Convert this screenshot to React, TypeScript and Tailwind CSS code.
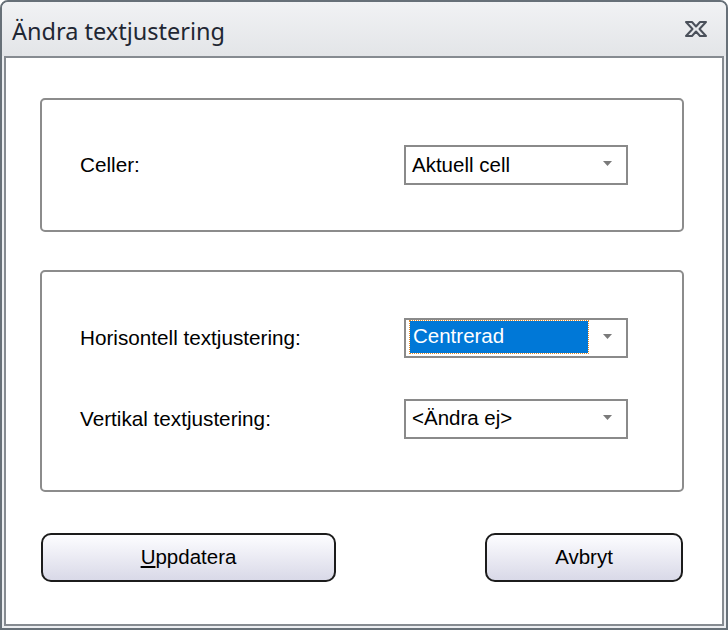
import React from 'react';

const body = { fontFamily: '"Liberation Sans", Arial, sans-serif' };

function Arrow() {
  return (
    <svg width="9" height="5" viewBox="0 0 9 5" className="absolute right-[14px] top-[14px]">
      <path d="M0 0 H9 L4.5 5 Z" fill="#7a7a7a" />
    </svg>
  );
}

function Select({ value, active }: { value: string; active?: boolean }) {
  return (
    <div className="relative h-[40px] w-[224px] border-2 border-[#8a8a8a] bg-white">
      {active ? (
        <div className="absolute left-[4px] top-[1px] h-[32px] w-[178px] bg-[#0078d7] outline-dotted outline-1 outline-[#e08a2a] flex items-center pl-[3px] text-[20.5px] text-white">
          {value}
        </div>
      ) : (
        <div className="flex h-full items-center pl-[6px] text-[20.5px] text-black">{value}</div>
      )}
      <Arrow />
    </div>
  );
}

function Row({ label, value, active }: { label: string; value: string; active?: boolean }) {
  return (
    <div className="flex items-center">
      <div className="w-[362px] pl-[38px] text-[20.7px] text-black">{label}</div>
      <Select value={value} active={active} />
    </div>
  );
}

function Button({ children, width }: { children: React.ReactNode; width: string }) {
  return (
    <button
      className={`${width} h-[49px] rounded-[10px] border-2 border-[#1c1c1c] bg-gradient-to-b from-[#fdfdff] to-[#d9d9e8] text-[20.5px] text-black`}
    >
      {children}
    </button>
  );
}

export default function App() {
  return (
    <div className="w-[728px] h-[630px] flex flex-col rounded-t-[8px] border-2 border-[#677078] bg-[#eceef1]" style={body}>
      <div className="h-[54px] flex items-center justify-between pl-[10px] pr-[18px] rounded-t-[6px] bg-gradient-to-b from-[#f1f2f4] to-[#e3e5e8]">
        <span className="pt-[5px] text-[23.5px] text-[#1f2733]" style={{ fontFamily: '"Noto Sans", "Liberation Sans", sans-serif' }}>
          Ändra textjustering
        </span>
        <svg width="24" height="18" viewBox="0 0 24 18">
          <path
            d="M2 2 H8 L12 6.5 L16 2 H22 L15.5 9 L22 16 H16 L12 11.5 L8 16 H2 L8.5 9 Z"
            fill="#e6e8eb"
            stroke="#4a505a"
            strokeWidth="2"
            strokeLinejoin="round"
          />
        </svg>
      </div>
      <div className="mx-[2px] mb-[2px] flex-1 flex flex-col border-2 border-[#868b91] bg-white pt-[40px] pl-[34px]">
        <div className="w-[644px] h-[134px] rounded-[5px] border-2 border-[#8c8c8c] flex items-center">
          <Row label="Celler:" value="Aktuell cell" />
        </div>
        <div className="mt-[38px] w-[644px] h-[222px] rounded-[5px] border-2 border-[#8c8c8c] flex flex-col justify-center gap-[41px] pb-[6px]">
          <Row label="Horisontell textjustering:" value="Centrerad" active />
          <Row label="Vertikal textjustering:" value="<Ändra ej>" />
        </div>
        <div className="mt-[41px] w-[644px] flex justify-between px-[1px]">
          <Button width="w-[295px]">
            <span className="underline underline-offset-2">U</span>ppdatera
          </Button>
          <Button width="w-[198px]">Avbryt</Button>
        </div>
      </div>
    </div>
  );
}
